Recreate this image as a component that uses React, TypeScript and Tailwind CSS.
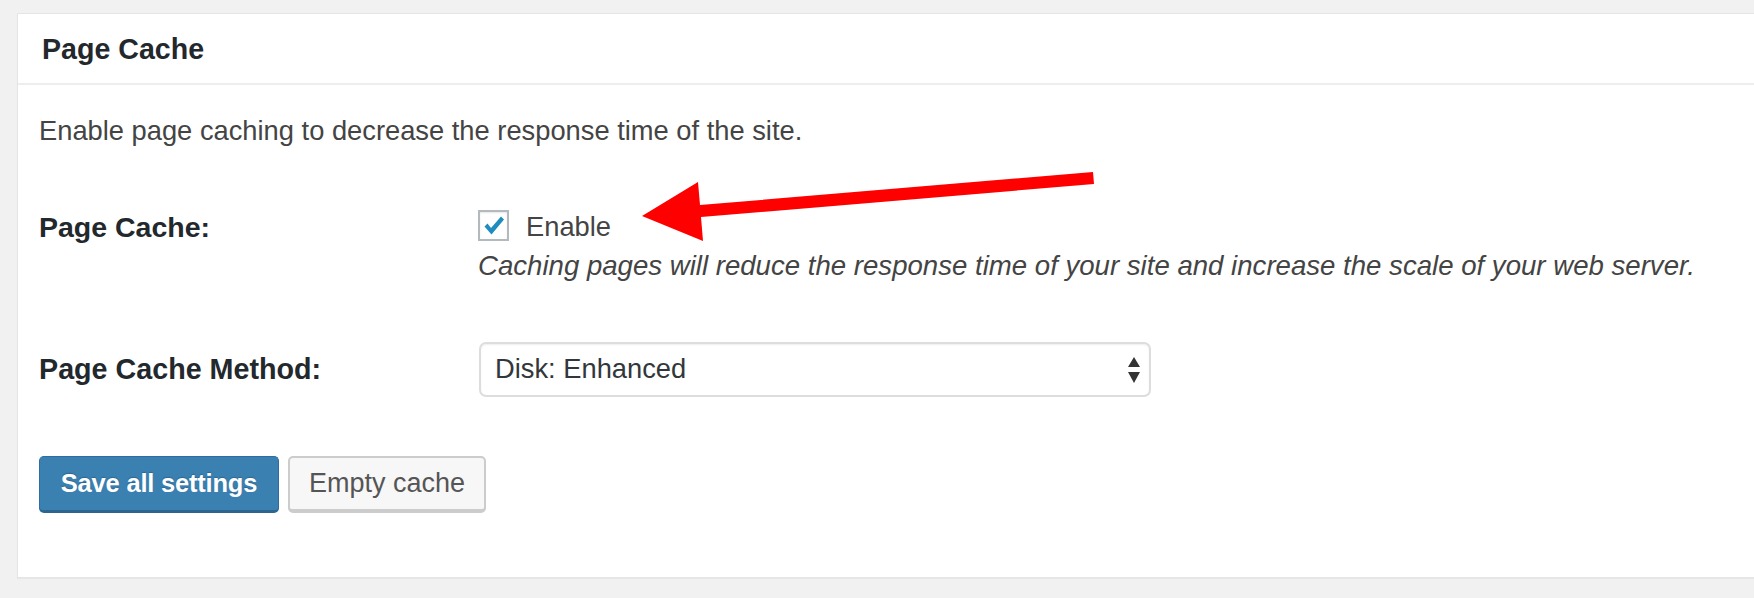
import React, { useState } from 'react';

const FONT = { fontFamily: '"Liberation Sans", Arial, sans-serif' };

const CheckBox: React.FC<{ checked: boolean; onToggle: () => void }> = ({ checked, onToggle }) => (
  <button
    onClick={onToggle}
    className="w-[31px] h-[31px] mb-[4px] shrink-0 border-2 border-[#b4b9be] bg-white shadow-[inset_0_1px_2px_rgba(0,0,0,0.1)] flex items-center justify-center"
  >
    {checked && (
      <svg width="27" height="27" viewBox="0 0 27 27">
        <path d="M4.5 14.5 L7.5 11.5 L11 16 L21 4.5 L24 7.5 L11.5 22.5 Z" fill="#1e8cbe" />
      </svg>
    )}
  </button>
);

export default function App() {
  const [enabled, setEnabled] = useState(true);
  const [method, setMethod] = useState('Disk: Enhanced');

  return (
    <div className="relative w-full h-[598px] bg-[#f1f1f1] pt-[13px] pl-[17px] overflow-hidden" style={FONT}>
      <div className="h-[565px] bg-white border border-r-0 border-[#e5e5e5] shadow-[0_1px_1px_rgba(0,0,0,0.04)]">
        <div className="h-[71px] border-b-2 border-[#eeeeee] pl-[24px] flex items-center">
          <h2 className="text-[28.6px] font-bold text-[#23282d] pt-[2px]">Page Cache</h2>
        </div>

        <div className="pl-[21px]">
          <p className="mt-[28px] text-[27.3px] leading-[36px] text-[#444444]">
            Enable page caching to decrease the response time of the site.
          </p>

          <div className="mt-[60px] flex">
            <div className="w-[439px] shrink-0 text-[28.5px] leading-[36px] font-bold text-[#23282d]">Page Cache:</div>
            <div>
              <div className="h-[36px] flex items-center gap-[17px]">
                <CheckBox checked={enabled} onToggle={() => setEnabled(!enabled)} />
                <span className="text-[27.3px] text-[#444444]">Enable</span>
              </div>
              <div className="mt-[3px] text-[27.6px] leading-[36px] italic text-[#444444]">
                Caching pages will reduce the response time of your site and increase the scale of your web server.
              </div>
            </div>
          </div>

          <div className="mt-[58px] flex items-center">
            <div className="w-[440px] shrink-0 text-[28.7px] font-bold text-[#23282d]">Page Cache Method:</div>
            <div className="relative w-[672px] h-[55px]">
              <select
                value={method}
                onChange={(e) => setMethod(e.target.value)}
                className="appearance-none w-full h-full border-2 border-[#dddddd] rounded-[7px] bg-white pl-[14px] text-[27.3px] text-[#32373c] shadow-[inset_0_1px_2px_rgba(0,0,0,0.07)]"
                style={FONT}
              >
                <option>Disk: Basic</option>
                <option>Disk: Enhanced</option>
                <option>Opcode: APC</option>
                <option>Memcached</option>
              </select>
              <svg className="absolute right-[11px] top-[15px] pointer-events-none" width="12" height="27" viewBox="0 0 12 27">
                <path d="M6 0 L12 10 L0 10 Z" fill="#333" />
                <path d="M0 15 L12 15 L6 26 Z" fill="#333" />
              </svg>
            </div>
          </div>

          <div className="mt-[59px] flex gap-[9px]">
            <button className="w-[240px] h-[57px] rounded-[5px] bg-[#3a80b1] border border-[#2e6d9e] border-b-[3px] border-b-[#2c6690] text-white text-[25.5px] font-bold tracking-[-0.2px] [text-shadow:0_-1px_1px_#2c6690]">
              Save all settings
            </button>
            <button className="w-[198px] h-[57px] rounded-[5px] bg-[#f7f7f7] border-2 border-[#cccccc] border-b-[4px] text-[#555555] text-[27px]">
              Empty cache
            </button>
          </div>
        </div>
      </div>

      <svg className="absolute inset-0 pointer-events-none" width="1754" height="598" viewBox="0 0 1754 598">
        <polygon
          points="642,216 698,182 700,205 1093,172 1094,184 701,217 703,241"
          fill="#ff0000"
        />
      </svg>
    </div>
  );
}
